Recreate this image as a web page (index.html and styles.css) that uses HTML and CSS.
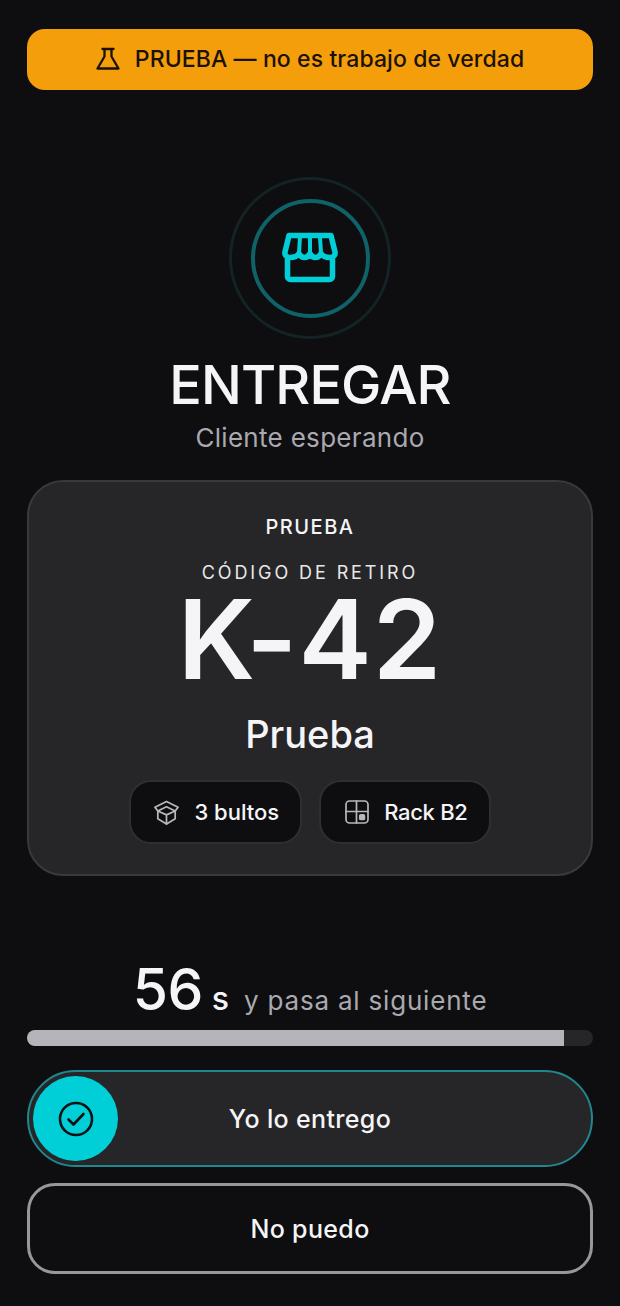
FILE: index.html
```html
<!DOCTYPE html>
<html lang="es">
<head>
<meta charset="utf-8">
<title>Entregar</title>
<link rel="stylesheet" href="styles.css">
</head>
<body>
<main class="page">
  <div class="banner">
    <svg class="banner-icon" viewBox="0 0 24 24" fill="none" stroke="#1a1206" stroke-width="2.300" stroke-linecap="round" stroke-linejoin="round"><path d="M6.500 2h11M8.500 2v7.500L1.500 21.500h21l-7-12V2"/></svg>
    <span>PRUEBA — no es trabajo de verdad</span>
  </div>
  <section class="hero">
    <div class="ring-outer">
      <div class="ring-inner">
        <svg class="store" viewBox="0 0 58 52" fill="none" stroke="#00cfd8" stroke-width="5.500" stroke-linecap="round" stroke-linejoin="round"><path d="M6.500 27V44.500a3 3 0 0 0 3 3H48.500a3 3 0 0 0 3-3V27"/><path d="M8 3.500H50L54 20C54.600 23 52.500 25.400 49.500 25.500C45 25.600 41.500 24 40 21.500C38.500 24.500 36.500 25.500 34.500 25.500C32 25.500 30.500 24.500 29 21.500C27.500 24.500 26 25.500 23.500 25.500C21.500 25.500 19.500 24.500 18 21.500C16.500 24 13 25.600 8.500 25.500C5.500 25.400 3.400 23 4 20Z"/><path d="M19 5L18 21M29 5V21M39 5L40 21" stroke-width="4"/></svg>
      </div>
    </div>
    <h1 class="title">ENTREGAR</h1>
    <p class="subtitle">Cliente esperando</p>
  </section>
  <section class="card">
    <div class="tag">PRUEBA</div>
    <div class="code-label">CÓDIGO DE RETIRO</div>
    <div class="code">K-42</div>
    <div class="name">Prueba</div>
    <div class="chips">
      <div class="chip chip-box">
        <svg class="chip-icon" viewBox="0 0 28 28" fill="none" stroke="#b8b8bc" stroke-width="1.800" stroke-linecap="round" stroke-linejoin="round"><path d="M14 2.500L26 8.500L23 12.500L14 8L5 12.500L2 8.500Z"/><path d="M5 12.500V20.500L14 26L23 20.500V12.500"/><path d="M5 12.500L14 16.500L23 12.500M14 16.500V26"/></svg>
        <span>3 bultos</span>
      </div>
      <div class="chip chip-rack">
        <svg class="chip-icon" viewBox="0 0 24 24" fill="none" stroke="#b8b8bc" stroke-width="1.700" stroke-linecap="round" stroke-linejoin="round"><rect x="1" y="1" width="22" height="22" rx="3.500"/><path d="M1 11.500h22M11.500 1v22"/><rect x="14.800" y="14.800" width="4.600" height="4.600" rx="1" fill="#b8b8bc"/></svg>
        <span>Rack B2</span>
      </div>
    </div>
  </section>
  <section class="timer">
    <div class="count"><span class="num">56</span><span class="unit">s</span><span class="hint">y pasa al siguiente</span></div>
    <div class="track"><div class="fill" style="width:94.900%"></div></div>
  </section>
  <div class="slide">
    <div class="knob">
      <svg class="check" viewBox="0 0 36 36" fill="none" stroke="#0d1114" stroke-width="2.600" stroke-linecap="round" stroke-linejoin="round"><circle cx="18" cy="18" r="16"/><path d="M10.500 18.500l5 5 10-10.500"/></svg>
    </div>
    <span class="slide-label">Yo lo entrego</span>
  </div>
  <button class="secondary" type="button">No puedo</button>
</main>
</body>
</html>
```

FILE: styles.css
```css
* { box-sizing: border-box; }
html, body { margin: 0; padding: 0; }
body {
  width: 620px;
  height: 1306px;
  overflow: hidden;
  background: #0e0e11;
  color: #f5f5f7;
  font-family: "Inter", "Noto Sans", sans-serif;
}
.page { display: flex; flex-direction: column; padding: 29px 27px 0; }
.banner {
  height: 61px;
  border-radius: 18px;
  background: #f59e0b;
  color: #1a1206;
  display: flex;
  align-items: center;
  justify-content: center;
  gap: 15px;
  padding-bottom: 1px;
  font-size: 23px;
  font-weight: 500;
  letter-spacing: 0.1px;
}
.banner-icon { width: 24px; height: 24px; }
.hero { display: flex; flex-direction: column; align-items: center; margin-top: 87px; }
.ring-outer {
  width: 162px; height: 162px;
  border-radius: 50%;
  border: 3px solid #142325;
  display: flex; align-items: center; justify-content: center;
}
.ring-inner {
  width: 119px; height: 119px;
  border-radius: 50%;
  border: 4px solid #0f6268;
  display: flex; align-items: center; justify-content: center;
}
.store { width: 58px; height: 52px; }
.title { margin: 11px 0 0; font-size: 54px; line-height: 70px; font-weight: 500; letter-spacing: -0.9px; }
.subtitle { margin: 0; font-size: 26px; line-height: 36px; letter-spacing: 0.3px; color: #a9a9af; }
.card {
  margin-top: 24px;
  height: 396px;
  border-radius: 36px;
  background: #262628;
  border: 2px solid #39393c;
  display: flex; flex-direction: column; align-items: center;
  padding-top: 30px;
}
.tag { font-size: 20px; line-height: 30px; font-weight: 500; letter-spacing: 1.5px; }
.code-label { margin-top: 17px; font-size: 18px; line-height: 27px; letter-spacing: 2.900px; color: #e8e8ea; }
.code { margin-top: 5px; font-size: 110px; line-height: 96px; font-weight: 600; letter-spacing: 1px; }
.name { margin-top: 22px; font-size: 38px; line-height: 50px; font-weight: 500; }
.chips { display: flex; gap: 17px; margin-top: 21px; }
.chip {
  height: 64px;
  border-radius: 22px;
  background: #0e0e11;
  border: 2px solid #2f2f32;
  display: flex; align-items: center;
  font-size: 22px;
  font-weight: 500;
}
.chip-box { gap: 14px; padding: 0 21px 0 22px; }
.chip-rack { gap: 15px; padding: 0 21px 0 24px; }
.chip-box .chip-icon { width: 27px; height: 27px; }
.chip-rack .chip-icon { width: 24px; height: 24px; }
.chip-rack span { letter-spacing: -0.3px; }
.timer { margin-top: 76px; }
.count { display: flex; align-items: baseline; justify-content: center; height: 78px; }
.num { font-size: 57px; line-height: 75px; font-weight: 500; letter-spacing: -0.5px; }
.unit { font-size: 32px; font-weight: 500; margin-left: 9px; }
.hint { font-size: 26px; letter-spacing: 0.8px; color: #a9a9af; margin-left: 15px; }
.track { height: 16px; border-radius: 8px; background: #262628; overflow: hidden; }
.fill { height: 100%; background: #b4b4ba; }
.slide {
  position: relative;
  margin-top: 24px;
  height: 97px;
  border-radius: 49px;
  background: #262628;
  border: 2px solid #1f888e;
  display: flex; align-items: center; justify-content: center;
  font-size: 25px;
  font-weight: 500;
  letter-spacing: 0.35px;
}
.knob {
  position: absolute;
  left: 4px; top: 4px;
  width: 85px; height: 85px;
  border-radius: 50%;
  background: #00cfd8;
  display: flex; align-items: center; justify-content: center;
}
.check { width: 36px; height: 36px; }
.secondary {
  margin-top: 16px;
  height: 91px;
  border-radius: 28px;
  background: transparent;
  border: 3px solid #98989c;
  color: #f5f5f7;
  font: 500 25px "Inter", "Noto Sans", sans-serif;
  letter-spacing: 0.35px;
}
```
